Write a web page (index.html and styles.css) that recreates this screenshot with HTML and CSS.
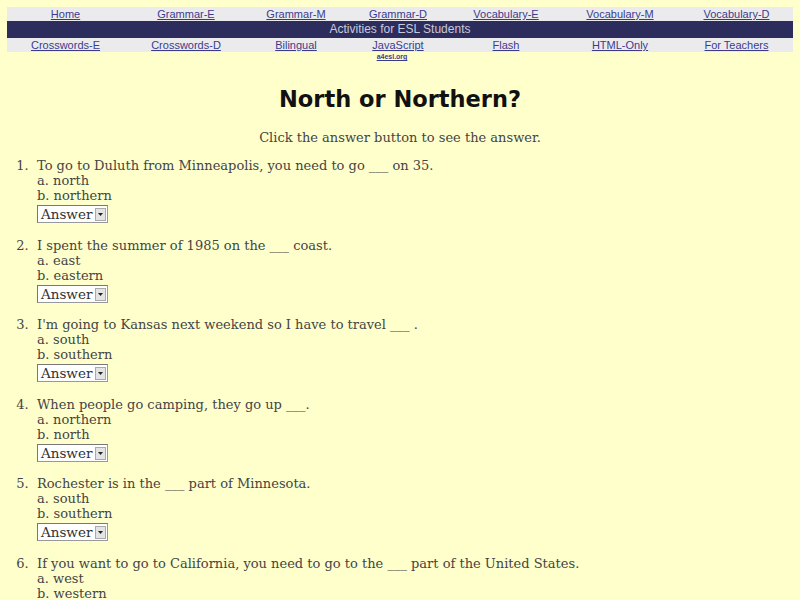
FILE: index.html
```html
<!DOCTYPE html>
<html>
<head>
<meta charset="utf-8">
<title>North or Northern?</title>
<link rel="stylesheet" href="styles.css">
</head>
<body>
<nav class="nav">
  <div class="nav-row">
    <a href="#">Home</a>
    <a href="#">Grammar-E</a>
    <a href="#">Grammar-M</a>
    <a href="#">Grammar-D</a>
    <a href="#">Vocabulary-E</a>
    <a href="#">Vocabulary-M</a>
    <a href="#">Vocabulary-D</a>
  </div>
  <div class="nav-band">Activities for ESL Students</div>
  <div class="nav-row">
    <a href="#">Crosswords-E</a>
    <a href="#">Crosswords-D</a>
    <a href="#">Bilingual</a>
    <a href="#">JavaScript</a>
    <a href="#">Flash</a>
    <a href="#">HTML-Only</a>
    <a href="#">For Teachers</a>
  </div>
  <div class="nav-sub">
    <a href="#" class="site">a4esl.org</a>
  </div>
</nav>

<h1 class="title">North or Northern?</h1>
<p class="intro">Click the answer button to see the answer.</p>

<ol class="quiz">
  <li>To go to Duluth from Minneapolis, you need to go ___ on 35.
    <div>a. north</div><div>b. northern</div>
    <span class="sel"><span class="sel-text">Answer</span><span class="sel-btn"><svg width="5" height="3" viewBox="0 0 5 3"><path d="M0 0H5L2.5 3Z" fill="#222"/></svg></span></span>
  </li>
  <li>I spent the summer of 1985 on the ___ coast.
    <div>a. east</div><div>b. eastern</div>
    <span class="sel"><span class="sel-text">Answer</span><span class="sel-btn"><svg width="5" height="3" viewBox="0 0 5 3"><path d="M0 0H5L2.5 3Z" fill="#222"/></svg></span></span>
  </li>
  <li>I'm going to Kansas next weekend so I have to travel ___ .
    <div>a. south</div><div>b. southern</div>
    <span class="sel"><span class="sel-text">Answer</span><span class="sel-btn"><svg width="5" height="3" viewBox="0 0 5 3"><path d="M0 0H5L2.5 3Z" fill="#222"/></svg></span></span>
  </li>
  <li>When people go camping, they go up ___.
    <div>a. northern</div><div>b. north</div>
    <span class="sel"><span class="sel-text">Answer</span><span class="sel-btn"><svg width="5" height="3" viewBox="0 0 5 3"><path d="M0 0H5L2.5 3Z" fill="#222"/></svg></span></span>
  </li>
  <li>Rochester is in the ___ part of Minnesota.
    <div>a. south</div><div>b. southern</div>
    <span class="sel"><span class="sel-text">Answer</span><span class="sel-btn"><svg width="5" height="3" viewBox="0 0 5 3"><path d="M0 0H5L2.5 3Z" fill="#222"/></svg></span></span>
  </li>
  <li>If you want to go to California, you need to go to the ___ part of the United States.
    <div>a. west</div><div>b. western</div>
    <span class="sel"><span class="sel-text">Answer</span><span class="sel-btn"><svg width="5" height="3" viewBox="0 0 5 3"><path d="M0 0H5L2.5 3Z" fill="#222"/></svg></span></span>
  </li>
</ol>
</body>
</html>
```

FILE: styles.css
```css
html, body {
  background: #ffffcc;
}
body {
  margin: 7px;
  font-family: "DejaVu Serif", "Liberation Serif", serif;
  font-size: 13px;
  color: #444;
}
.nav {
  font-family: "Liberation Sans", Arial, sans-serif;
  font-size: 11px;
}
.nav-row {
  display: grid;
  grid-template-columns: 117px 124px 96px 108px 108px 120px 113px;
  background: #ebebee;
  height: 14px;
  line-height: 14px;
  text-align: center;
}
.nav-row a, .nav-sub a {
  color: #3b3b8c;
  text-decoration: underline;
}
.nav-band {
  background: #2d2d5d;
  color: #c9c9dc;
  font-size: 12px;
  height: 17px;
  line-height: 17px;
  text-align: center;
}
.nav-sub {
  display: grid;
  grid-template-columns: 117px 124px 96px 108px 108px 120px 113px;
  text-align: center;
  line-height: 10px;
}
.nav-sub .site {
  grid-column: 4;
  font-size: 7px;
  font-weight: bold;
  margin-right: 12px;
}
.title {
  font-family: "DejaVu Sans", sans-serif;
  font-weight: bold;
  font-size: 22.5px;
  color: #111;
  text-align: center;
  margin: 22px 0 0;
  line-height: 30px;
}
.intro {
  text-align: center;
  margin: 16px 0 0;
  line-height: 15px;
}
.quiz {
  margin: 13px 0 0;
  padding-left: 30px;
  line-height: 15px;
}
.quiz li {
  margin-bottom: 14.6px;
  padding-left: 0;
}
.quiz li::marker {
  content: counter(list-item) ".  ";
}
.sel {
  display: inline-flex;
  align-items: stretch;
  margin-top: 2px;
  height: 18px;
  box-sizing: border-box;
  border: 1px solid #999;
  border-top-color: #777;
  border-left-color: #777;
  background: #fff;
  vertical-align: top;
}
.sel-text {
  padding: 0 2px 0 3px;
  line-height: 16px;
  font-size: 13.5px;
  color: #333;
}
.sel-btn {
  width: 11px;
  margin: 2px 1px 1px 1px;
  background: #e4e4e4;
  border: 1px solid #aaa;
  box-sizing: border-box;
  display: flex;
  align-items: center;
  justify-content: center;
}
```
